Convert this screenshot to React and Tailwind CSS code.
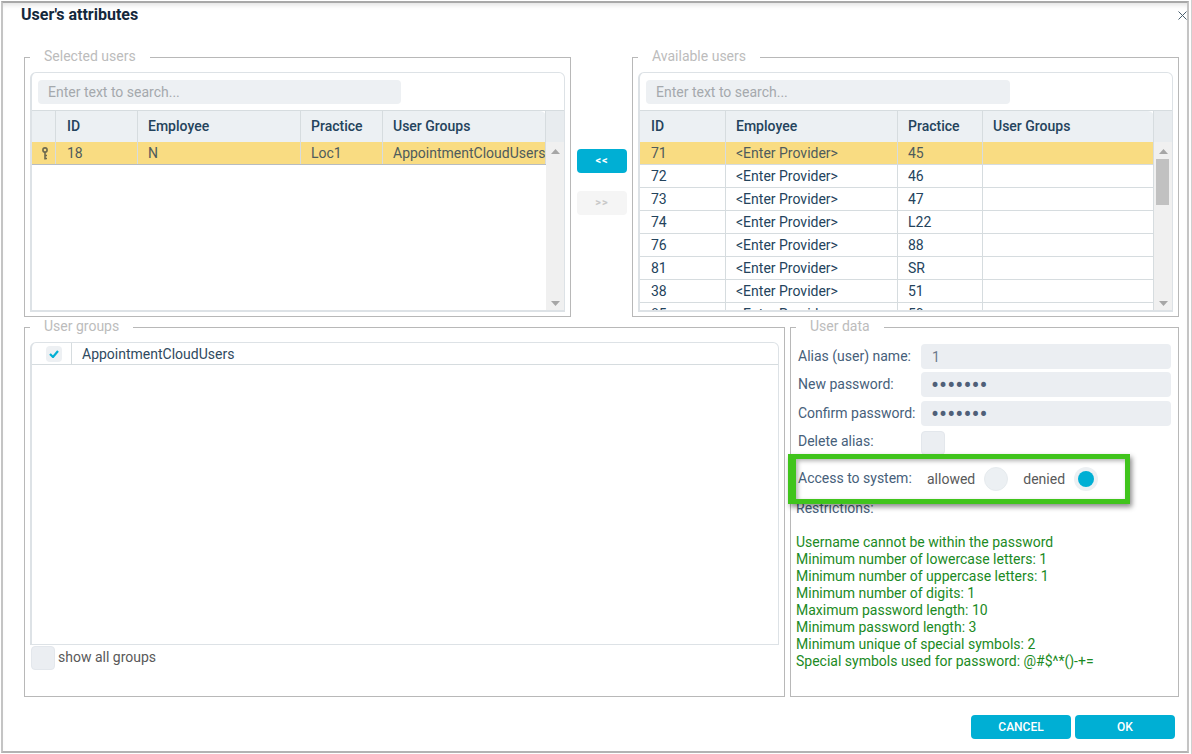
import React from 'react';

const selectedCols = ['w-[24px]', 'w-[82px]', 'w-[163px]', 'w-[82px]', 'w-[163px]'];
const availableCols = ['w-[86px]', 'w-[172px]', 'w-[85px]', 'w-[171px]'];

const availableRows = [
  ['71', '<Enter Provider>', '45', ''],
  ['72', '<Enter Provider>', '46', ''],
  ['73', '<Enter Provider>', '47', ''],
  ['74', '<Enter Provider>', 'L22', ''],
  ['76', '<Enter Provider>', '88', ''],
  ['81', '<Enter Provider>', 'SR', ''],
  ['38', '<Enter Provider>', '51', ''],
  ['85', '<Enter Provider>', '50', ''],
];

const restrictions = [
  'Username cannot be within the password',
  'Minimum number of lowercase letters: 1',
  'Minimum number of uppercase letters: 1',
  'Minimum number of digits: 1',
  'Maximum password length: 10',
  'Minimum password length: 3',
  'Minimum unique of special symbols: 2',
  'Special symbols used for password: @#$^*()-+=',
];

const KeyIcon = () => (
  <svg width="8" height="13" viewBox="0 0 8 13" fill="none" stroke="#6d6a4f">
    <circle cx="4" cy="3" r="2.1" strokeWidth="1.6" />
    <path d="M4 5v7.5M4 8.5h2M4 11.5h2" strokeWidth="1.6" />
  </svg>
);

const Triangle = ({ down }) => (
  <svg width="9" height="5" viewBox="0 0 9 5" fill="#a6a6a6">
    <path d={down ? 'M0 0h9L4.5 5z' : 'M0 5h9L4.5 0z'} />
  </svg>
);

const Fieldset = ({ title, className, children }) => (
  <div className={`relative shrink-0 border border-[#b8b8b8] ${className}`}>
    <span className="absolute -top-[11px] left-[5px] h-[18px] bg-white px-[14px] text-[14px] leading-[18px] text-[#bcbcbc]">
      {title}
    </span>
    {children}
  </div>
);

const Row = ({ cols, cells, className }) => (
  <div className={`flex ${className}`}>
    {cols.map((col, i) => (
      <div key={i} className={`${col} shrink-0 overflow-hidden whitespace-nowrap border-r border-[#d6dcdf] pl-[10px]`}>
        {cells[i]}
      </div>
    ))}
  </div>
);

// id cells sit one pixel further in than the others
const Id = ({ children }) => <span className="pl-px">{children}</span>;

const Grid = ({ searchWidth, cols, headers, rows, thumb }) => (
  <div className="flex h-[240px] flex-col overflow-hidden rounded-t-md border border-b-2 border-l-2 border-[#dde2e6]">
    <div className="border-b border-[#d6dcdf] pt-[7px] pr-[7px] pb-[6px] pl-[6px]">
      <input placeholder="Enter text to search..." className={`${searchWidth} block h-[24px] rounded bg-[#edf0f3] px-[10px] text-[14px] outline-none placeholder:text-[#a5a9ad]`} />
    </div>
    <div className="flex min-h-0 flex-1">
      <div className="min-h-0 flex-1 overflow-hidden">
        <Row cols={cols} cells={headers} className="h-[31px] rounded-tr-md bg-[#ecf0f3] text-[14px] font-medium leading-[30px] text-[#24435c]" />
        {rows}
      </div>
      <div className="flex w-[18px] shrink-0 flex-col">
        <div className="h-[31px] shrink-0 bg-[#e8ecef]" />
        <div className="relative flex flex-1 flex-col items-center justify-between bg-[#f0f0f0] pt-[7px] pb-[4px]">
          <Triangle />
          {thumb && <div className="absolute top-[17px] left-[2px] h-[46px] w-[13px] bg-[#c1c1c1]" />}
          <Triangle down />
        </div>
      </div>
    </div>
  </div>
);

const FormField = ({ label, type, value, className }) => (
  <div className={`flex items-start ${className}`}>
    <span className="w-[123px] shrink-0 text-[14px] leading-[24px] text-[#46607a]">{label}</span>
    <input
      readOnly
      type={type}
      value={value}
      className={`block h-[25px] w-[250px] rounded bg-[#ebeef2] outline-none ${type === 'password' ? 'px-[10px] text-[24px] text-[#4f5f78]' : 'px-[11px] text-[14px] text-[#6b7a8c]'}`}
    />
  </div>
);

export default function App() {
  return (
    <div className="h-[754px] w-[1192px] overflow-hidden border-r border-[#d0d0d0] bg-white pt-px pl-px font-['Roboto',sans-serif]">
      <div className="relative box-border h-[752px] w-[1188px] border-2 border-t-[#a8a8a8] border-r-[#c4c4c4] border-b-[#b3b3b3] border-l-[#c4c4c4] shadow-[inset_0_5px_5px_-3px_rgba(0,0,0,0.12)]">
        <div className="flex h-[54px] justify-between pl-[18px]">
          <h1 className="pt-[3px] text-[16px] font-bold leading-[18px] text-[#14283c]">User's attributes</h1>
          <svg className="mt-[8px]" width="9" height="9" viewBox="0 0 9 9" stroke="#4a5f6e" fill="none">
            <path d="M.5.5l8 8M8.5.5l-8 8" />
          </svg>
        </div>

        {/* Users */}
        <div className="flex pl-[21px]">
          <Fieldset title="Selected users" className="h-[260px] w-[547px] px-[5px] pt-[14px]">
            <Grid
              searchWidth="w-[363px]"
              cols={selectedCols}
              headers={['', <Id key="id">ID</Id>, 'Employee', 'Practice', 'User Groups']}
              rows={
                <Row
                  cols={selectedCols}
                  cells={[
                    <div key="k" className="-ml-[1px] pt-[5px]"><KeyIcon /></div>,
                    <Id key="id">18</Id>,
                    'N',
                    'Loc1',
                    'AppointmentCloudUsers',
                  ]}
                  className="h-[23px] border-b border-[#b8bcc0] bg-[#f9dc82] text-[14px] leading-[22px] text-[#4f5b5c]"
                />
              }
            />
          </Fieldset>

          <div className="mr-[5px] ml-[6px] flex w-[50px] shrink-0 flex-col pt-[92px]">
            <button className="h-[24px] rounded bg-[#00afd4] text-[11px] font-bold tracking-[1px] text-white">&lt;&lt;</button>
            <button className="mt-[18px] h-[24px] rounded bg-[#f5f5f5] text-[11px] font-bold tracking-[1px] text-[#c8c8c8]">&gt;&gt;</button>
          </div>

          <Fieldset title="Available users" className="h-[260px] w-[547px] px-[5px] pt-[14px]">
            <Grid
              thumb
              searchWidth="w-[364px]"
              cols={availableCols}
              headers={[<Id key="id">ID</Id>, 'Employee', 'Practice', 'User Groups']}
              rows={availableRows.map((cells, i) => (
                <Row
                  key={cells[0]}
                  cols={availableCols}
                  cells={[<Id key="id">{cells[0]}</Id>, cells[1], cells[2], cells[3]]}
                  className={`h-[23px] border-b border-[#d6dcdf] text-[14px] leading-[22px] ${i === 0 ? 'bg-[#f9dc82] text-[#4f5b5c]' : 'text-[#24435c]'}`}
                />
              ))}
            />
          </Fieldset>
        </div>

        {/* Groups and user data */}
        <div className="mt-[10px] flex gap-[5px] pl-[21px]">
          <Fieldset title="User groups" className="h-[370px] w-[761px] px-[5px] pt-[14px]">
            <div className="h-[303px] rounded-t-md border border-l-2 border-[#dde2e6]">
              <div className="flex h-[22px] items-center border-b border-[#d6dcdf]">
                <div className="flex h-full w-[40px] shrink-0 items-center border-r border-[#d6dcdf] pl-[14px]">
                  <div className="flex h-[16px] w-[16px] items-center justify-center rounded bg-[#edf0f3]">
                    <svg width="10" height="8" viewBox="0 0 10 8" fill="none" stroke="#00afd4" strokeWidth="2.2">
                      <path d="M1 4l3 3 5-6" />
                    </svg>
                  </div>
                </div>
                <span className="pt-px pl-[10px] text-[14px] text-[#2f4a60]">AppointmentCloudUsers</span>
              </div>
            </div>
            <div className="mt-px flex items-center gap-[3px]">
              <div className="ml-px h-[24px] w-[24px] rounded border border-[#e3e7ec] bg-[#ebeef2]" />
              <span className="-mt-[2px] text-[14px] text-[#595959]">show all groups</span>
            </div>
          </Fieldset>

          <Fieldset title="User data" className="h-[370px] w-[389px] pt-[16px] pl-[7px]">
            <FormField label="Alias (user) name:" type="text" value="1" className="h-[28px]" />
            <FormField label="New password:" type="password" value="1234567" className="h-[29px]" />
            <FormField label="Confirm password:" type="password" value="1234567" className="h-[29px]" />
            <div className="flex h-[24px] items-start pt-px">
              <span className="w-[123px] shrink-0 text-[14px] leading-[20px] text-[#46607a]">Delete alias:</span>
              <div className="h-[24px] w-[24px] rounded border border-[#e3e7ec] bg-[#ebeef2]" />
            </div>

            <div className="mt-[1px] flex h-[48px] items-center text-[14px]">
              <span className="-mt-[1px] w-[129px] shrink-0 text-[#46607a]">Access to system:</span>
              <span className="text-[#595959]">allowed</span>
              <span className="ml-[9px] h-[24px] w-[24px] rounded-full border border-[#e6ebee] bg-[#ecf0f3]" />
              <span className="ml-[15px] text-[#595959]">denied</span>
              <span className="ml-[9px] flex h-[24px] w-[24px] items-center justify-center rounded-full bg-[#ecf0f3]">
                <span className="h-[16px] w-[16px] rounded-full bg-[#00afd4]" />
              </span>
            </div>

            <p className="mt-[-3px] -ml-[2px] text-[14px] leading-[17px] text-[#46607a]">Restrictions:</p>
            <div className="mt-[17px] -ml-[2px] text-[14px] leading-[17px] text-[#1b8a24]">
              {restrictions.map((line) => (
                <div key={line}>{line}</div>
              ))}
            </div>

            {/* green highlight drawn over the form */}
            <div className="pointer-events-none absolute top-[126px] -left-[3px] h-[50px] w-[342px] border-[5px] border-l-[8px] border-[#40c41c] shadow-[2px_3px_5px_rgba(0,0,0,0.45),inset_2px_2px_4px_rgba(0,0,0,0.3)]" />
          </Fieldset>
        </div>

        <div className="mt-[18px] flex justify-end gap-[4px] pr-[12px]">
          <button className="h-[24px] w-[100px] rounded bg-[#00afd4] text-[12px] font-medium text-white">CANCEL</button>
          <button className="h-[24px] w-[100px] rounded bg-[#00afd4] text-[12px] font-medium text-white">OK</button>
        </div>
      </div>
    </div>
  );
}
